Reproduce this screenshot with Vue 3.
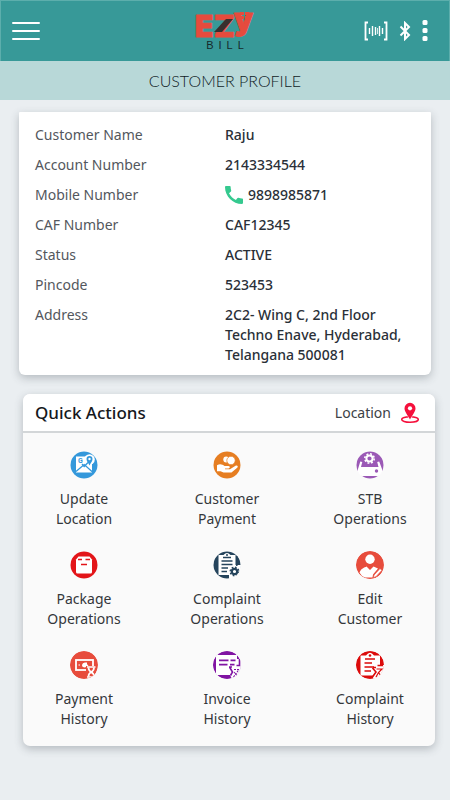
<script setup>
const details = [
  { label: 'Customer Name', value: 'Raju' },
  { label: 'Account Number', value: '2143334544' },
  { label: 'Mobile Number', value: '9898985871', phone: true },
  { label: 'CAF Number', value: 'CAF12345' },
  { label: 'Status', value: 'ACTIVE' },
  { label: 'Pincode', value: '523453' },
]
const address = ['2C2- Wing C, 2nd Floor', 'Techno Enave, Hyderabad,', 'Telangana 500081']

const actions = [
  { icon: 'map', lines: ['Update', 'Location'] },
  { icon: 'pay', lines: ['Customer', 'Payment'] },
  { icon: 'stb', lines: ['STB', 'Operations'] },
  { icon: 'package', lines: ['Package', 'Operations'] },
  { icon: 'complaint', lines: ['Complaint', 'Operations'] },
  { icon: 'edit', lines: ['Edit', 'Customer'] },
  { icon: 'payhistory', lines: ['Payment', 'History'] },
  { icon: 'invoice', lines: ['Invoice', 'History'] },
  { icon: 'complainthistory', lines: ['Complaint', 'History'] },
]
</script>

<template>
  <div class="page">
    <header class="topbar">
      <button class="icon-btn" type="button" aria-label="Menu">
        <svg width="28" height="20" viewBox="0 0 28 20" stroke="#fff" stroke-width="2" stroke-linecap="round">
          <path d="M1 2H27M1 10H27M1 18H27" />
        </svg>
      </button>
      <div class="logo">
        <svg width="62" height="36" viewBox="0 0 62 36">
          <g class="logo-word">
            <text x="1" y="30">E</text>
            <text x="20" y="30">Z</text>
            <text x="40" y="23">y</text>
          </g>
          <path d="M20 25L32 12H39L28 25Z" fill="#39302f" />
          <path d="M46 5h4v3h-4zM51 5h4v3h-4zM46 9h4v3h-4zM51 9h4v3h-4z" fill="#e64b3d" />
        </svg>
        <div class="logo-sub"><span>B</span><span>I</span><span>L</span><span>L</span></div>
      </div>
      <div class="tools">
        <button class="icon-btn" type="button" aria-label="Scan">
          <svg width="24" height="20" viewBox="0 0 24 20" fill="none" stroke="#fff">
            <path d="M4 1.500H1.500V18.500H4M20 1.500H22.500V18.500H20" stroke-width="1.800" />
            <path d="M5.500 7V13M8.500 5V15M11.500 6V14M15.500 5V15M18.500 7V13" stroke-width="1.400" />
            <path d="M13.500 7V13" stroke-width=".8" />
          </svg>
        </button>
        <button class="icon-btn" type="button" aria-label="Bluetooth">
          <svg width="12" height="20" viewBox="0 0 12 20" fill="none" stroke="#fff" stroke-width="2">
            <path d="M1.500 5.500L10 14L6 18V2L10 6L1.500 14.500" />
          </svg>
        </button>
        <button class="icon-btn" type="button" aria-label="More">
          <svg width="6" height="22" viewBox="0 0 6 22" fill="#fff">
            <rect x=".5" y="0" width="5" height="5" rx="1.500" />
            <rect x=".5" y="8" width="5" height="5" rx="1.500" />
            <rect x=".5" y="16" width="5" height="5" rx="1.500" />
          </svg>
        </button>
      </div>
    </header>

    <h1 class="title">CUSTOMER PROFILE</h1>

    <main class="content">
      <section class="card profile">
        <dl class="details">
          <template v-for="d in details" :key="d.label">
            <dt>{{ d.label }}</dt>
            <dd>
              <a v-if="d.phone" class="phone" :href="'tel:' + d.value">
                <svg width="18" height="18" viewBox="3 3 18 18" fill="#35c98f">
                  <path d="M20.010 15.380c-1.230 0-2.420-.2-3.530-.56a.98.98 0 0 0-1.010.24l-1.570 1.970c-2.830-1.350-5.480-3.900-6.890-6.830l1.950-1.660c.27-.28.35-.67.24-1.020-.37-1.110-.56-2.300-.56-3.530 0-.54-.45-.99-.99-.99H4.190C3.650 3 3 3.240 3 3.990 3 13.280 10.730 21 20.010 21c.71 0 .99-.63.99-1.180v-3.450c0-.54-.45-.99-.99-.99z" />
                </svg>
                {{ d.value }}
              </a>
              <template v-else>{{ d.value }}</template>
            </dd>
          </template>
          <dt>Address</dt>
          <dd><span v-for="line in address" :key="line" class="line">{{ line }}</span></dd>
        </dl>
      </section>

      <section class="card quick">
        <div class="quick-head">
          <h2>Quick Actions</h2>
          <a class="location" href="#location">
            Location
            <svg width="20" height="22" viewBox="0 0 20 22">
              <ellipse cx="10" cy="17.500" rx="8.300" ry="2.800" fill="none" stroke="#f5103c" stroke-width="1.600" />
              <path d="M10 17.500C8 13.500 4.500 10 4.500 6.300a5.500 5.500 0 0 1 11 0C15.500 10 12 13.500 10 17.500Z" fill="#f5103c" stroke="#fff" stroke-width="1" paint-order="stroke" />
              <circle cx="10" cy="6.300" r="2.100" fill="#fff" />
            </svg>
          </a>
        </div>

        <div class="grid">
          <button v-for="a in actions" :key="a.icon" class="action" type="button">
            <svg class="badge" width="28" height="28" viewBox="0 0 28 28">
              <g v-if="a.icon === 'map'">
                <circle cx="14" cy="14" r="13.500" fill="#3498db" />
                <path d="M6 5.500H22V21.500H6Z" fill="#fff" />
                <circle cx="19.500" cy="8.500" r="5.300" fill="#fff" />
                <path d="M19.500 14.500C18.500 12 16.500 10.500 16.500 8a3 3 0 0 1 6 0C22.500 10.500 20.500 12 19.500 14.500Z" fill="#3498db" />
                <circle cx="19.500" cy="8" r="1.200" fill="#fff" />
                <path d="M6 20.500L14.200 13.500L22.500 21M12 13L14.200 15.500L18 11.500" fill="none" stroke="#3498db" stroke-width="1.300" />
                <text x="8" y="12" class="g-mark">G</text>
              </g>
              <g v-else-if="a.icon === 'pay'">
                <circle cx="14" cy="14" r="13.500" fill="#e67e22" />
                <circle cx="13.200" cy="8.500" r="2.900" fill="#fff" />
                <circle cx="18" cy="9.500" r="4.200" fill="#fff" stroke="#e67e22" stroke-width=".7" />
                <path d="M4 14.200C7 12.500 9.500 13.500 11.500 15H15.500C17.500 15.200 17 17.300 15.500 17.500H12V18.200H17L22.500 14.700C24.500 14 25.500 15.500 24.200 16.800L18.500 21.500H10.500L7.500 20.200H4Z" fill="#fff" />
              </g>
              <g v-else-if="a.icon === 'stb'">
                <circle cx="14" cy="14" r="13.500" fill="#9b59b6" />
                <circle cx="13.500" cy="7.500" r="3.100" fill="none" stroke="#fff" stroke-width="2" />
                <circle cx="13.500" cy="7.500" r="4.700" fill="none" stroke="#fff" stroke-width="1.600" stroke-dasharray="1.900 1.791" />
                <path d="M4.300 10.500L6.300 11L5 16H22.500L21.200 11L23.200 10.500L26 18V23Q25 25 22 25H6Q3 25 2 23V18Z" fill="#fff" />
                <circle cx="20.500" cy="20" r="1.700" fill="#9b59b6" />
              </g>
              <g v-else-if="a.icon === 'package'">
                <circle cx="14" cy="14" r="13.500" fill="#e31519" />
                <path d="M8.500 5.500H19.500L22 8.500V21Q22 22.500 20.500 22.500H7.500Q6 22.500 6 21V8.500Z" fill="#fff" />
                <path d="M8 8.500H12M15.500 8.500H20M11 13.500H17" stroke="#e31519" stroke-width="1.300" />
              </g>
              <g v-else-if="a.icon === 'complaint'">
                <circle cx="14" cy="14" r="13.500" fill="#25445c" />
                <path d="M5.500 4H10.500Q14 0 17.500 4H22.500V14H28V28H16V24H5.500Z" fill="#fff" />
                <circle cx="14" cy="4" r="1" fill="#25445c" />
                <path d="M10 6.500H18M8.500 10H19.500M8.500 13.500H19.500M8.500 17H15M8.500 20.500H14" stroke="#25445c" stroke-width="1.500" />
                <path d="M23.800 5V15" stroke="#25445c" stroke-width="1.500" />
                <circle cx="21.500" cy="20.500" r="2.700" fill="none" stroke="#25445c" stroke-width="2.200" />
                <circle cx="21.500" cy="20.500" r="4.300" fill="none" stroke="#25445c" stroke-width="1.400" stroke-dasharray="1.700 1.677" />
              </g>
              <g v-else-if="a.icon === 'edit'">
                <circle cx="14" cy="14" r="14" fill="#e74c3c" />
                <circle cx="14" cy="8.300" r="4.700" fill="#fff" />
                <path d="M3.500 21.500C5 17.500 8.500 16.500 10.500 15.500L14 19L17.500 15.500L22 17.500L17 23.500L16.500 26.500H9Q5 25 3.500 21.500Z" fill="#fff" />
                <path d="M18 24L24 17.500L26 19.300L20 25.700L17.300 26.700Z" fill="#fff" stroke="#e74c3c" stroke-width=".7" />
              </g>
              <g v-else-if="a.icon === 'payhistory'">
                <circle cx="14" cy="14" r="14" fill="#e74c3c" />
                <rect x="6" y="9" width="17" height="10" fill="none" stroke="#fff" stroke-width="1.800" />
                <path d="M12 14Q12.500 11.200 15.500 11.500H17V13.200L18.500 14.500L15 16.500Q12 16.500 12 14Z" fill="#fff" />
                <path d="M8.500 14H10" stroke="#fff" stroke-width="1.200" />
                <path d="M16 15H26.500V27H16Z" fill="#e74c3c" />
                <path d="M17 16H25.500M17 26H25.500" stroke="#fff" stroke-width="1.700" />
                <path d="M18.500 16.500Q18.500 19.500 21.200 21Q24 19.500 24 16.500M18.500 25.500Q18.500 22.500 21.200 21Q24 22.500 24 25.500" fill="none" stroke="#fff" stroke-width="1.700" />
              </g>
              <g v-else-if="a.icon === 'invoice'">
                <circle cx="14" cy="14" r="14" fill="#8114a3" />
                <path d="M3 4H24V8H28V28H19L17 24H3Z" fill="#fff" />
                <path d="M6 9.300H15.500M17.500 9.300H22.500M6 13.700H14.500M17 13.700H21.500" stroke="#8114a3" stroke-width="1.800" />
                <path d="M26.500 8V14.500H23.500M16 16H19M16.500 16L19.500 21L17.500 24.500" fill="none" stroke="#8114a3" stroke-width="1.600" />
                <path d="M21 18.500H26M20.500 26L26 18.500M21 21L24.500 25" fill="none" stroke="#8114a3" stroke-width="1.100" stroke-dasharray="2 1" />
              </g>
              <g v-else>
                <circle cx="14" cy="14" r="14" fill="#dc0b0b" />
                <path d="M4.500 4.500H10Q14 -1 18 4.500H24V14H28V28H17V24.500H4.500Z" fill="#fff" />
                <circle cx="14" cy="4.500" r="1.300" fill="#dc0b0b" />
                <path d="M9 8H19M8.500 12H16M8.500 16H18M8.500 20H15" stroke="#dc0b0b" stroke-width="1.600" />
                <path d="M21.500 14.500H27M17 16.500H20M16.500 17L20 21L16.500 26" fill="none" stroke="#dc0b0b" stroke-width="1.600" />
                <path d="M20.500 18H26L22.500 21.500L25 25M20 26L22.500 21.500" fill="none" stroke="#dc0b0b" stroke-width="1.200" />
              </g>
            </svg>
            <span class="label">
              <span v-for="line in a.lines" :key="line" class="line">{{ line }}</span>
            </span>
          </button>
        </div>
      </section>
    </main>
  </div>
</template>

<style>
body {
  margin: 0;
  background: #eaeef1;
}
</style>

<style scoped>
.page {
  min-height: 100vh;
  background: #eaeef1;
  font-family: "Noto Sans", "Open Sans", sans-serif;
  color: #2a3038;
}
.topbar {
  box-sizing: border-box;
  height: 61px;
  padding: 0 11px;
  display: grid;
  grid-template-columns: 1fr auto 1fr;
  align-items: center;
  background: #379998;
  border: 1px solid #5caeac;
  border-bottom: 0;
}
.icon-btn {
  display: flex;
  padding: 0;
  border: 0;
  background: none;
  justify-self: start;
}
.logo {
  display: flex;
  flex-direction: column;
  align-items: center;
  padding-bottom: 4px;
}
.logo svg {
  display: block;
  overflow: visible;
}
.logo-word {
  font-family: Inter, sans-serif;
  font-size: 30px;
  font-weight: 900;
  fill: #e64b3d;
  stroke: #e64b3d;
  stroke-width: 1px;
  stroke-linejoin: round;
}
.logo-sub {
  display: flex;
  gap: 5px;
  margin-top: -3px;
  font-family: "Liberation Sans", sans-serif;
  font-size: 11px;
  line-height: 11px;
  color: #16292b;
}
.tools {
  display: flex;
  align-items: center;
  justify-content: flex-end;
  gap: 11px;
  padding-right: 10px;
}
.title {
  margin: 0;
  height: 39px;
  line-height: 39px;
  text-align: center;
  font-family: Lato, sans-serif;
  font-size: 16px;
  font-weight: 300;
  color: #101c26;
  background: #b8d8d8;
}
.content {
  padding: 12px 15px 24px 19px;
}
.card {
  box-shadow: 0 3px 8px rgba(60, 70, 80, 0.3);
}
.profile {
  margin-right: 4px;
  padding: 13px 16px 10px;
  background: #fff;
  border-radius: 1px 1px 6px 6px;
}
.details {
  margin: 0;
  display: grid;
  grid-template-columns: 1fr 1fr;
  gap: 10px 0;
  font-size: 14px;
  line-height: 20px;
}
dt {
  color: #53575d;
}
dd {
  margin: 0;
  font-weight: 500;
  white-space: nowrap;
}
.phone {
  display: flex;
  align-items: center;
  gap: 5px;
  color: inherit;
  text-decoration: none;
}
.line {
  display: block;
}
.quick {
  margin: 19px 0 0 4px;
  background: #fafafa;
  border-radius: 7px;
  overflow: hidden;
}
.quick-head {
  display: flex;
  align-items: center;
  justify-content: space-between;
  height: 37px;
  padding: 0 15px 0 12px;
  background: #fff;
  border-bottom: 2px solid #d3d6d8;
}
h2 {
  margin: 0;
  font-size: 17px;
  font-weight: 500;
  color: #15181c;
}
.location {
  display: flex;
  align-items: center;
  gap: 9px;
  font-size: 14px;
  color: #3c4146;
  text-decoration: none;
}
.grid {
  display: grid;
  grid-template-columns: repeat(3, 100px);
  justify-content: space-between;
  row-gap: 22px;
  padding: 18px 15px 17px 11px;
}
.action {
  display: flex;
  flex-direction: column;
  align-items: center;
  gap: 10px;
  padding: 0;
  border: 0;
  background: none;
  font-family: inherit;
  font-size: 14px;
  line-height: 20px;
  color: #34373a;
}
.badge {
  border-radius: 50%;
}
.g-mark {
  font-family: Roboto, sans-serif;
  font-size: 7px;
  font-weight: 700;
  fill: #3498db;
}
</style>
